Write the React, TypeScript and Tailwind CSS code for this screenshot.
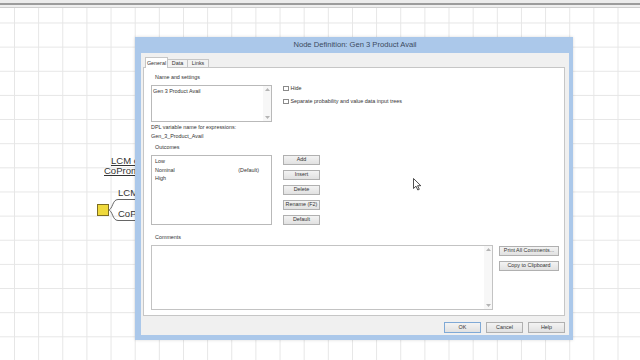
import React from "react";

const Btn = ({ children, w = "w-[37px]", h = "h-[10px]", def = false }: { children: React.ReactNode; w?: string; h?: string; def?: boolean }) => (
  <div
    className={`${w} ${h} flex items-center justify-center border ${def ? "border-[#7fa9d6]" : "border-[#b0b0b0]"} bg-[linear-gradient(#f3f3f3,#e1e1e1)] text-[5.4px] leading-none text-[#333] whitespace-nowrap`}
  >
    {children}
  </div>
);

const Arrows = () => (
  <div className="w-[8px] h-full flex flex-col items-center justify-between py-[2px] bg-[#f7f7f7]">
    <svg width="5" height="3" viewBox="0 0 5 3"><path d="M0 3 L2.5 0 L5 3 Z" fill="#b5b5b5" /></svg>
    <svg width="5" height="3" viewBox="0 0 5 3"><path d="M0 0 L2.5 3 L5 0 Z" fill="#b5b5b5" /></svg>
  </div>
);

const Check = ({ label }: { label: string }) => (
  <div className="flex items-center h-[7px] gap-[2px]">
    <div className="w-[5.5px] h-[5.5px] border border-[#8a8a8a] bg-white" />
    <span className="text-[5.4px] leading-none text-[#333] whitespace-nowrap">{label}</span>
  </div>
);

export default function App() {
  return (
    <div className="relative w-[640px] h-[360px] overflow-hidden bg-white font-['Liberation_Sans',Arial,sans-serif]">
      {/* top bar */}
      <div className="flex flex-col">
        <div className="h-[3px] bg-[#ececec]" />
        <div className="h-[2px] bg-[#9c9c9c]" />
        <div className="h-[2px] bg-[#efefef]" />
        <div className="h-[1px] bg-[#cfcfcf]" />
      </div>
      {/* grid canvas */}
      <div className="h-[352px] bg-white [background-image:linear-gradient(to_right,#e6e6e6_1px,transparent_1px),linear-gradient(to_bottom,#e6e6e6_1px,transparent_1px)] [background-size:24.15px_24.15px] [background-position:14px_14.5px]" />

      {/* background diagram (clipped where the dialog covers it) */}
      <div className="absolute left-[111px] top-[156px] w-[25px] overflow-hidden text-[9.5px] leading-[10px] text-[#333] underline whitespace-nowrap">LCM or</div>
      <div className="absolute left-[104px] top-[166px] w-[32px] overflow-hidden text-[9.5px] leading-[10px] text-[#333] underline whitespace-nowrap">CoPromotion?</div>
      <div className="absolute left-[118px] top-[188px] w-[18px] overflow-hidden text-[9.5px] leading-[10px] text-[#333] whitespace-nowrap">LCM</div>
      <div className="absolute left-[118px] top-[209px] w-[18px] overflow-hidden text-[9.5px] leading-[10px] text-[#333] whitespace-nowrap">CoPromotion</div>
      <svg className="absolute left-[108px] top-[195px]" width="28" height="32" viewBox="0 0 28 32">
        <path d="M0 15 C5 15, 4 4.5, 10 4.5 L28 4.5" fill="none" stroke="#666" strokeWidth="1" />
        <path d="M0 15 C5 15, 4 25.5, 10 25.5 L28 25.5" fill="none" stroke="#666" strokeWidth="1" />
      </svg>
      <div className="absolute left-[97px] top-[204px] w-[12px] h-[12px] bg-[#efd93c] border border-[#7d6d22]" />

      {/* dialog */}
      <div className="absolute z-10 left-[135px] top-[37px] w-[438px] h-[303px] bg-[#abc8ea] flex flex-col pl-[6px] pr-[4px] pb-[5px] shadow-[0_0_3px_rgba(0,0,0,0.15)]">
        <div className="h-[16px] flex items-center justify-center text-[7.6px] text-[#3b4a60] whitespace-nowrap">
          Node Definition: Gen 3 Product Avail
        </div>
        <div className="flex-1 bg-[#f0f0f0] flex flex-col">
          {/* tabs */}
          <div className="h-[15px] flex items-end pl-[4px]">
            <div className="relative z-10 w-[23px] h-[11px] bg-white border border-b-0 border-[#c6c6c6] flex items-start justify-center pt-[3px] text-[5.4px] leading-none text-[#333]">General</div>
            <div className="w-[20px] h-[8px] mb-[1px] bg-[#f3f3f3] border border-b-0 border-l-0 border-[#c6c6c6] flex items-center justify-center text-[5.4px] leading-none text-[#333]">Data</div>
            <div className="w-[21px] h-[8px] mb-[1px] bg-[#f3f3f3] border border-b-0 border-l-0 border-[#c6c6c6] flex items-center justify-center text-[5.4px] leading-none text-[#333]">Links</div>
          </div>
          {/* panel */}
          <div className="-mt-[1px] ml-[2px] mr-[4px] h-[249px] bg-white border border-[#c6c6c6] flex flex-col pl-[7px] pt-[6px]">
            <div className="flex">
              <div className="w-[121px] flex flex-col">
                <div className="h-[7px] pl-[4px] text-[5.4px] leading-[7px] text-[#333]">Name and settings</div>
                <div className="mt-[4px] h-[37px] border border-[#b9b9b9] flex">
                  <div className="flex-1 pl-[1px] pt-[1.5px] text-[5.4px] leading-[7px] text-[#333]">Gen 3 Product Avail</div>
                  <Arrows />
                </div>
                <div className="mt-[1px] text-[5.4px] leading-[8.5px] text-[#333]">DPL variable name for expressions:</div>
                <div className="text-[5.4px] leading-[8.5px] text-[#333]">Gen_3_Product_Avail</div>
                <div className="mt-[4px] h-[7px] pl-[4px] text-[5.4px] leading-[7px] text-[#333]">Outcomes</div>
                <div className="mt-[4px] h-[70px] border border-[#b9b9b9] flex justify-between pl-[3px] pt-[1px] pr-[12px] text-[5.4px] leading-[8.5px] text-[#333]">
                  <div className="flex flex-col">
                    <div className="h-[8.5px]">Low</div>
                    <div className="h-[8.5px]">Nominal</div>
                    <div className="h-[8.5px]">High</div>
                  </div>
                  <div className="mt-[8.5px] h-[8.5px]">(Default)</div>
                </div>
              </div>
              <div className="ml-[11px] flex flex-col">
                <div className="mt-[11px] flex flex-col gap-[6px]">
                  <Check label="Hide" />
                  <Check label="Separate probability and value data input trees" />
                </div>
                <div className="mt-[50px] flex flex-col gap-[5px]">
                  <Btn>Add</Btn>
                  <Btn>Insert</Btn>
                  <Btn>Delete</Btn>
                  <Btn>Rename (F2)</Btn>
                  <Btn>Default</Btn>
                </div>
              </div>
            </div>
            <div className="mt-[9px] h-[7px] pl-[4px] text-[5.4px] leading-[7px] text-[#333]">Comments</div>
            <div className="mt-[4px] flex">
              <div className="w-[342px] h-[65px] border border-[#c3c3c3] flex justify-end">
                <Arrows />
              </div>
              <div className="ml-[6px] mt-[1px] flex flex-col gap-[5px]">
                <Btn w="w-[60px]">Print All Comments...</Btn>
                <Btn w="w-[60px]">Copy to Clipboard</Btn>
              </div>
            </div>
          </div>
          {/* bottom buttons */}
          <div className="mt-[6px] flex justify-end gap-[5px] pr-[4px]">
            <Btn h="h-[11px]" def>OK</Btn>
            <Btn h="h-[11px]">Cancel</Btn>
            <Btn h="h-[11px]">Help</Btn>
          </div>
        </div>
      </div>

      {/* mouse cursor */}
      <svg className="absolute z-20 left-[413px] top-[178px]" width="9" height="13" viewBox="0 0 9 13">
        <path d="M0.5 0.5 L0.5 10.5 L3 8.2 L4.8 12 L6.3 11.3 L4.6 7.7 L7.8 7.7 Z" fill="#fff" stroke="#222" strokeWidth="0.8" />
      </svg>
    </div>
  );
}
